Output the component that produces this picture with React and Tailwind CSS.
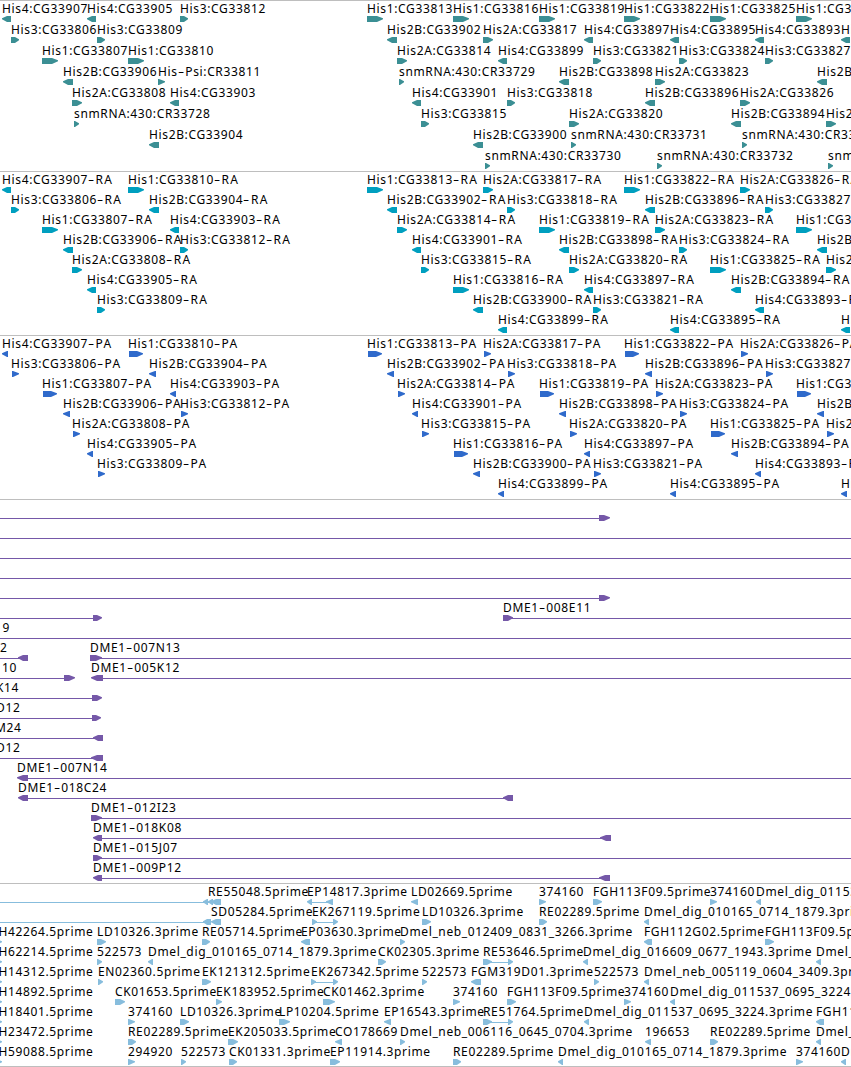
// left pixel and name of every gene in the histone cluster
const GENES = {
  907: ["His4:CG33907", 2],
  905: ["His4:CG33905", 87],
  812: ["His3:CG33812", 180],
  813: ["His1:CG33813", 367],
  816: ["His1:CG33816", 453],
  819: ["His1:CG33819", 539],
  822: ["His1:CG33822", 624],
  825: ["His1:CG33825", 710],
  828: ["His1:CG33828", 796],
  806: ["His3:CG33806", 11],
  809: ["His3:CG33809", 97],
  902: ["His2B:CG33902", 387],
  817: ["His2A:CG33817", 483],
  897: ["His4:CG33897", 584],
  895: ["His4:CG33895", 670],
  893: ["His4:CG33893", 755],
  891: ["His4:CG33891", 841],
  807: ["His1:CG33807", 42],
  810: ["His1:CG33810", 128],
  814: ["His2A:CG33814", 397],
  899: ["His4:CG33899", 498],
  821: ["His3:CG33821", 593],
  824: ["His3:CG33824", 679],
  827: ["His3:CG33827", 765],
  906: ["His2B:CG33906", 63],
  811: ["His-Psi:CR33811", 158],
  729: ["snmRNA:430:CR33729", 399],
  898: ["His2B:CG33898", 559],
  823: ["His2A:CG33823", 655],
  892: ["His2B:CG33892", 817],
  808: ["His2A:CG33808", 72],
  903: ["His4:CG33903", 170],
  901: ["His4:CG33901", 412],
  818: ["His3:CG33818", 507],
  896: ["His2B:CG33896", 645],
  826: ["His2A:CG33826", 740],
  728: ["snmRNA:430:CR33728", 74],
  815: ["His3:CG33815", 421],
  820: ["His2A:CG33820", 569],
  894: ["His2B:CG33894", 731],
  829: ["His2A:CG33829", 826],
  904: ["His2B:CG33904", 149],
  900: ["His2B:CG33900", 473],
  731: ["snmRNA:430:CR33731", 571],
  733: ["snmRNA:430:CR33733", 742],
  730: ["snmRNA:430:CR33730", 485],
  732: ["snmRNA:430:CR33732", 657],
  734: ["snmRNA:430:CR33734", 828],
};

// [direction, width, coding offset, coding width]
const SHAPES = {
  His1: ["r", 16, 1, 14],
  His2A: ["r", 10, 1, 7],
  His2B: ["l", 10, 0, 7],
  His3: ["r", 8, 1, 7],
  His4: ["l", 9, 0, 6],
  "His-Psi": ["r", 7, 0, 7],
  snmRNA: ["r", 5, 0, 5],
};

const GENE_ROWS = [
  [907, 905, 812, 813, 816, 819, 822, 825, 828],
  [806, 809, 902, 817, 897, 895, 893, 891],
  [807, 810, 814, 899, 821, 824, 827],
  [906, 811, 729, 898, 823, 892],
  [808, 903, 901, 818, 896, 826],
  [728, 815, 820, 894, 829],
  [904, 900, 731, 733],
  [730, 732, 734],
];

const TRANSCRIPT_ROWS = [
  [907, 810, 813, 817, 822, 826],
  [806, 904, 902, 818, 896, 827],
  [807, 903, 814, 819, 823, 828],
  [906, 812, 901, 898, 824, 892],
  [808, 815, 820, 825, 829],
  [905, 816, 897, 894],
  [809, 900, 821, 893],
  [899, 895, 891],
];

// labels: [text, x], heads: [direction, x, width], lines: [from, to]
const BAC_ROWS = [
  { heads: [["r", 599, 11]], lines: [[0, 600]] },
  { lines: [[0, 851]] },
  { lines: [[0, 851]] },
  { lines: [[0, 851]] },
  { heads: [["r", 599, 11]], lines: [[0, 600]] },
  { labels: [["DME1-008E11", 503]], heads: [["r", 93, 9], ["r", 503, 10]], lines: [[0, 94], [503, 851]] },
  { labels: [["19", -5]], lines: [[0, 851]] },
  { labels: [["2", 0], ["DME1-007N13", 90]], heads: [["l", 18, 10], ["r", 90, 12]], lines: [[0, 20], [90, 851]] },
  { labels: [["10", 2], ["DME1-005K12", 91]], heads: [["r", 64, 11], ["l", 91, 12]], lines: [[0, 66], [94, 851]] },
  { labels: [["K14", -4]], heads: [["r", 92, 10]], lines: [[0, 93]] },
  { labels: [["D12", -4]], heads: [["r", 92, 9]], lines: [[0, 93]] },
  { labels: [["M24", -5]], heads: [["l", 93, 10]], lines: [[0, 97]] },
  { labels: [["D12", -4]], heads: [["l", 91, 12]], lines: [[0, 95]] },
  { labels: [["DME1-007N14", 17]], heads: [["l", 17, 11]], lines: [[20, 851]] },
  { labels: [["DME1-018C24", 18]], heads: [["l", 18, 10], ["l", 503, 10]], lines: [[20, 508]] },
  { labels: [["DME1-012I23", 91]], heads: [["r", 91, 11]], lines: [[91, 851]] },
  { labels: [["DME1-018K08", 93]], heads: [["l", 93, 9], ["l", 600, 11]], lines: [[96, 605]] },
  { labels: [["DME1-015J07", 93]], heads: [["r", 93, 9]], lines: [[93, 851]] },
  { labels: [["DME1-009P12", 93]], heads: [["l", 93, 9], ["l", 599, 11]], lines: [[96, 605]] },
];

// reads: [text, x, direction, width], plus extra heads and lines for paired ends
const EST_ROWS = [
  {
    reads: [
      ["RE55048.5prime", 208, "l", 5],
      ["EP14817.3prime", 307, "l", 5],
      ["LD02669.5prime", 411, "l", 7],
      ["374160", 539, "r", 7],
      ["FGH113F09.5prime", 593, "r", 9],
      ["374160", 710, "r", 7],
      ["Dmel_dig_011537_0695_3224.3prime", 756, "l", 5],
    ],
    heads: [["l", 203, 5], ["l", 211, 10], ["l", 326, 7]],
    lines: [[0, 215], [310, 328]],
  },
  {
    reads: [
      ["SD05284.5prime", 211, "l", 10],
      ["EK267119.5prime", 312, "r", 5],
      ["LD10326.3prime", 422, "r", 9],
      ["RE02289.5prime", 539, "r", 8],
      ["Dmel_dig_010165_0714_1879.3prime", 644, "l", 5],
    ],
    heads: [["l", 203, 8], ["r", 333, 5]],
    lines: [[0, 206], [314, 336]],
  },
  {
    reads: [
      ["GH42264.5prime", -11, "r", 13],
      ["LD10326.3prime", 97, "r", 9],
      ["RE05714.5prime", 202, "r", 8],
      ["EP03630.3prime", 301, "l", 9],
      ["Dmel_neb_012409_0831_3266.3prime", 400, "r", 5],
      ["FGH112G02.5prime", 644, "l", 8],
      ["FGH113F09.5prime", 765, "r", 9],
    ],
  },
  {
    reads: [
      ["GH62214.5prime", -11, "r", 13],
      ["522573", 97, "r", 5],
      ["Dmel_dig_010165_0714_1879.3prime", 148, "l", 5],
      ["CK02305.3prime", 378, "r", 8],
      ["RE53646.5prime", 483, "r", 9],
      ["Dmel_dig_016609_0677_1943.3prime", 583, "l", 5],
      ["Dmel_dig_010165_0714_1879.3prime", 816, "l", 5],
    ],
    heads: [["r", 508, 5]],
    lines: [[488, 511]],
  },
  {
    reads: [
      ["GH14312.5prime", -11, "r", 13],
      ["EN02360.5prime", 98, "r", 5],
      ["EK121312.5prime", 202, "r", 9],
      ["EK267342.5prime", 311, "r", 5],
      ["522573", 422, "r", 5],
      ["FGM319D01.3prime", 471, "l", 10],
      ["522573", 594, "r", 5],
      ["Dmel_neb_005119_0604_3409.3prime", 644, "l", 5],
    ],
    heads: [["r", 333, 5]],
    lines: [[314, 336]],
  },
  {
    reads: [
      ["GH14892.5prime", -11, "r", 13],
      ["CK01653.5prime", 115, "r", 10],
      ["EK183952.5prime", 216, "r", 6],
      ["CK01462.3prime", 323, "r", 12],
      ["374160", 453, "r", 7],
      ["FGH113F09.5prime", 507, "r", 9],
      ["374160", 624, "r", 7],
      ["Dmel_dig_011537_0695_3224.3prime", 670, "l", 5],
    ],
  },
  {
    reads: [
      ["GH18401.5prime", -11, "r", 13],
      ["374160", 128, "r", 7],
      ["LD10326.3prime", 180, "r", 9],
      ["LP10204.5prime", 279, "r", 11],
      ["EP16543.3prime", 384, "l", 7],
      ["RE51764.5prime", 483, "r", 9],
      ["Dmel_dig_011537_0695_3224.3prime", 584, "l", 5],
      ["FGH113F09.5prime", 816, "l", 8],
    ],
    heads: [["r", 508, 5]],
    lines: [[488, 511]],
  },
  {
    reads: [
      ["GH23472.5prime", -11, "r", 13],
      ["RE02289.5prime", 128, "r", 8],
      ["EK205033.5prime", 228, "r", 10],
      ["CO178669", 335, "l", 7],
      ["Dmel_neb_006116_0645_0704.3prime", 400, "r", 5],
      ["196653", 645, "l", 6],
      ["RE02289.5prime", 710, "r", 8],
      ["Dmel_dig_010165_0714_1879.3prime", 816, "l", 5],
    ],
  },
  {
    reads: [
      ["GH59088.5prime", -11, "r", 13],
      ["294920", 128, "r", 7],
      ["522573", 181, "r", 5],
      ["CK01331.3prime", 229, "r", 8],
      ["EP11914.3prime", 330, "r", 10],
      ["RE02289.5prime", 453, "r", 8],
      ["Dmel_dig_010165_0714_1879.3prime", 558, "l", 5],
      ["374160", 796, "r", 7],
      ["Dmel_dig_011537_0695_3224.3prime", 841, "l", 5],
    ],
  },
];

function geneRow(ids, suffix) {
  const labels = [];
  const heads = [];
  ids.forEach((id) => {
    const [name, x] = GENES[id];
    const [dir, width, cdsOffset, cdsWidth] = SHAPES[name.split(":")[0]];
    labels.push([name + suffix, x]);
    heads.push(suffix === "-PA" ? [dir, x + cdsOffset, cdsWidth] : [dir, x, width]);
  });
  return { labels, heads };
}

function readRow({ reads, heads = [], lines }) {
  return {
    labels: reads.map(([text, x]) => [text, x]),
    heads: [...reads.map(([, x, dir, width]) => [dir, x, width]), ...heads],
    lines,
  };
}

function Head({ dir, x, width }) {
  const tip = width <= 7 ? width - 1 : Math.min(6, Math.ceil(width / 2));
  const body = width - tip;
  return (
    <svg
      className="absolute top-[16px] h-[6px] fill-current"
      style={{ left: x, width }}
      viewBox={`0 0 ${width} 6`}
    >
      <path
        d={`M0 0H${body}L${width} 2.2V3.2L${body} 6H0Z`}
        transform={dir === "l" ? `translate(${width} 0) scale(-1 1)` : undefined}
      />
    </svg>
  );
}

// the hyphen is set wider than the font's own
function Label({ text, x }) {
  const [name, ...rest] = text.split("-");
  const tail = rest.join("-");
  const isProduct = tail === "RA" || tail === "PA";
  return (
    <span
      className="absolute top-0 whitespace-nowrap text-[12px] leading-[17px] tracking-[0.64px] text-black"
      style={{ left: x }}
    >
      {name}
      {tail && (
        <>
          <span className="inline-block w-[7.6px] origin-left scale-x-[1.6]">-</span>
          <span className={isProduct ? "tracking-[1.3px]" : ""}>{tail}</span>
        </>
      )}
    </span>
  );
}

function Row({ row, className }) {
  const { labels = [], heads = [], lines = [] } = row;
  return (
    <div className={`relative shrink-0 ${className}`}>
      {lines.map(([from, to], i) => (
        <div key={i} className="absolute top-[19px] h-px bg-current" style={{ left: from, width: to - from }} />
      ))}
      {heads.map(([dir, x, width], i) => (
        <Head key={i} dir={dir} x={x} width={width} />
      ))}
      {labels.map(([text, x], i) => (
        <Label key={i} text={text} x={x} />
      ))}
    </div>
  );
}

function Track({ rows, className, rowClass = "h-[20px]" }) {
  return (
    <section className={`flex shrink-0 flex-col ${className}`}>
      {/* the rule is drawn inside the first pixel of the track */}
      <div className="-mb-px h-px shrink-0 bg-[#bebebe]" />
      {rows.map((row, i) => (
        <Row key={i} row={row} className={rowClass} />
      ))}
    </section>
  );
}

export default function App() {
  return (
    <main className="flex h-[1067px] w-[851px] flex-col overflow-hidden bg-white font-['Noto_Sans',sans-serif]">
      <Track rows={GENE_ROWS.map((ids) => geneRow(ids, ""))} className="h-[171px] text-[#3b8f94]" rowClass="h-[21px]" />
      <Track rows={TRANSCRIPT_ROWS.map((ids) => geneRow(ids, "-RA"))} className="h-[164px] text-[#009fbf]" />
      <Track rows={TRANSCRIPT_ROWS.map((ids) => geneRow(ids, "-PA"))} className="h-[164px] text-[#2f6acb]" />
      <Track rows={BAC_ROWS} className="h-[384px] text-[#7558a8]" />
      <Track rows={EST_ROWS.map(readRow)} className="h-[183px] text-[#87bddd]" />
      <div className="h-px shrink-0 bg-[#bebebe]" />
    </main>
  );
}
